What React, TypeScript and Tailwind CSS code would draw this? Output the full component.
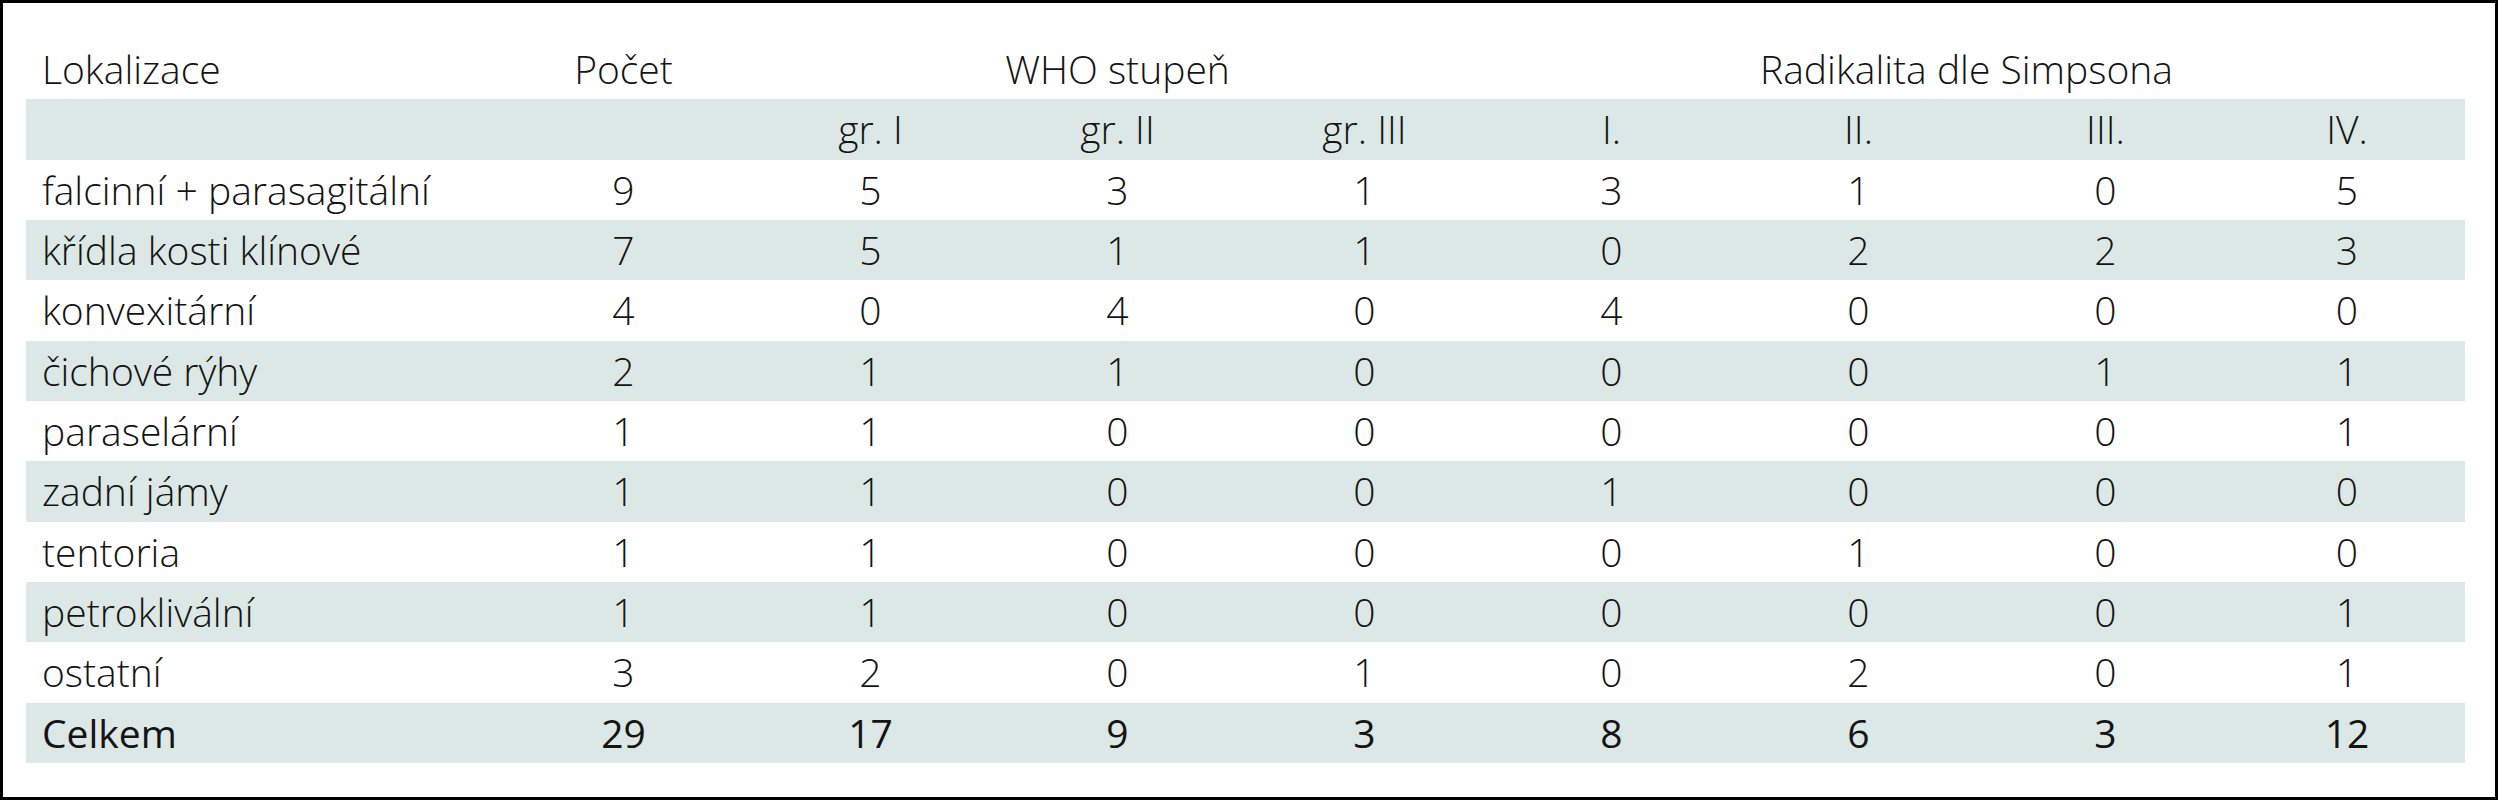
const rows: { label: string; values: number[] }[] = [
  { label: "falcinní + parasagitální", values: [9, 5, 3, 1, 3, 1, 0, 5] },
  { label: "křídla kosti klínové", values: [7, 5, 1, 1, 0, 2, 2, 3] },
  { label: "konvexitární", values: [4, 0, 4, 0, 4, 0, 0, 0] },
  { label: "čichové rýhy", values: [2, 1, 1, 0, 0, 0, 1, 1] },
  { label: "paraselární", values: [1, 1, 0, 0, 0, 0, 0, 1] },
  { label: "zadní jámy", values: [1, 1, 0, 0, 1, 0, 0, 0] },
  { label: "tentoria", values: [1, 1, 0, 0, 0, 1, 0, 0] },
  { label: "petroklivální", values: [1, 1, 0, 0, 0, 0, 0, 1] },
  { label: "ostatní", values: [3, 2, 0, 1, 0, 2, 0, 1] },
];

const totals = [29, 17, 9, 3, 8, 6, 3, 12];

const rowGrid =
  "grid grid-cols-[474px_repeat(7,247px)_1fr] h-[60.33px] items-center";

function Row({
  label,
  values,
  shaded,
  bold,
}: {
  label: string;
  values: (number | string)[];
  shaded?: boolean;
  bold?: boolean;
}) {
  return (
    <div className={`${rowGrid} ${shaded ? "bg-[#dce8e5]" : ""} ${bold ? "font-medium" : ""}`}>
      <div className="pl-[16px] whitespace-nowrap">{label}</div>
      {values.map((v, i) => (
        <div key={i} className="text-center">
          {v}
        </div>
      ))}
    </div>
  );
}

export default function App() {
  return (
    <div className="w-[2498px] h-[800px] bg-white border-[3px] border-black pt-[36px] pl-[23px] pr-[30px] font-['Open_Sans',sans-serif] font-light text-[39px] text-[#141414] leading-normal">
      {/* Header */}
      <div className={rowGrid}>
        <div className="pl-[16px]">Lokalizace</div>
        <div className="text-center">Počet</div>
        <div className="col-span-3 text-center">WHO stupeň</div>
        <div className="col-span-4 text-center pr-[20px]">Radikalita dle Simpsona</div>
      </div>
      <Row label="" values={["", "gr. I", "gr. II", "gr. III", "I.", "II.", "III.", "IV."]} shaded />

      {/* Body */}
      {rows.map((r, i) => (
        <Row key={r.label} label={r.label} values={r.values} shaded={i % 2 === 1} />
      ))}
      <Row label="Celkem" values={totals} shaded bold />
    </div>
  );
}
